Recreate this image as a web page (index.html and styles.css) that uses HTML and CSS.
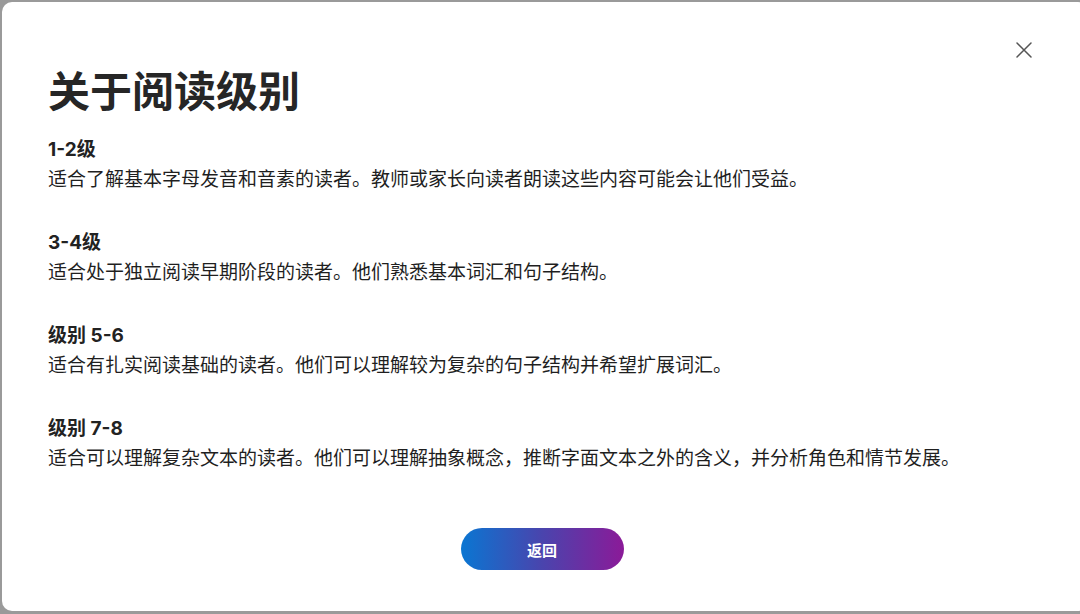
FILE: index.html
```html
<!DOCTYPE html>
<html lang="zh-CN">
<head>
<meta charset="utf-8">
<title>关于阅读级别</title>
<link rel="stylesheet" href="styles.css">
</head>
<body>
<div class="dialog" role="dialog" aria-labelledby="dialog-title">
  <button class="close" type="button" aria-label="关闭">
    <svg viewBox="0 0 16 16" width="16" height="16" aria-hidden="true">
      <path d="M1 1 L15 15 M15 1 L1 15" stroke="#555" stroke-width="1.5" stroke-linecap="round" fill="none"/>
    </svg>
  </button>
  <h1 class="title" id="dialog-title">关于阅读级别</h1>
  <div class="levels">
    <section class="level">
      <h2 class="level-name">1-2级</h2>
      <p class="level-desc">适合了解基本字母发音和音素的读者。教师或家长向读者朗读这些内容可能会让他们受益。</p>
    </section>
    <section class="level">
      <h2 class="level-name">3-4级</h2>
      <p class="level-desc">适合处于独立阅读早期阶段的读者。他们熟悉基本词汇和句子结构。</p>
    </section>
    <section class="level">
      <h2 class="level-name">级别 5-6</h2>
      <p class="level-desc">适合有扎实阅读基础的读者。他们可以理解较为复杂的句子结构并希望扩展词汇。</p>
    </section>
    <section class="level">
      <h2 class="level-name">级别 7-8</h2>
      <p class="level-desc">适合可以理解复杂文本的读者。他们可以理解抽象概念，推断字面文本之外的含义，并分析角色和情节发展。</p>
    </section>
  </div>
  <div class="actions">
    <button class="back" type="button">返回</button>
  </div>
</div>
</body>
</html>
```

FILE: styles.css
```css
html, body {
  margin: 0;
  height: 100%;
}

body {
  background: #9a9a9a;
  overflow: hidden;
  font-family: Inter, "Noto Sans CJK SC", sans-serif;
  color: #222;
}

.dialog {
  position: relative;
  box-sizing: border-box;
  width: 1086px;
  height: 609px;
  margin: 2px 0 0 2px;
  padding: 65px 52px 0 46px;
  background: #fff;
  border-radius: 10px;
}

.close {
  position: absolute;
  top: 36px;
  right: 52px;
  width: 24px;
  height: 24px;
  padding: 0;
  border: 0;
  background: transparent;
  display: flex;
  align-items: center;
  justify-content: center;
  cursor: pointer;
}

.title {
  margin: 0;
  font-size: 42px;
  line-height: 50px;
  font-weight: 700;
  color: #262626;
}

.levels {
  margin-top: 18px;
  display: flex;
  flex-direction: column;
  gap: 33px;
}

.level-name,
.level-desc {
  margin: 0;
  font-size: 19px;
  line-height: 30px;
}

.level-name {
  font-weight: 700;
  color: #222;
}

.level-desc {
  font-weight: 400;
  color: #1f1f1f;
}

.actions {
  margin-top: 54px;
  display: flex;
  justify-content: center;
}

.back {
  width: 163px;
  height: 42px;
  border: 0;
  border-radius: 21px;
  background: linear-gradient(90deg, #0a76d2 0%, #4a44ad 50%, #8b1a98 100%);
  color: #fff;
  font-family: Inter, "Noto Sans CJK SC", sans-serif;
  font-size: 15px;
  font-weight: 700;
  cursor: pointer;
}
```
